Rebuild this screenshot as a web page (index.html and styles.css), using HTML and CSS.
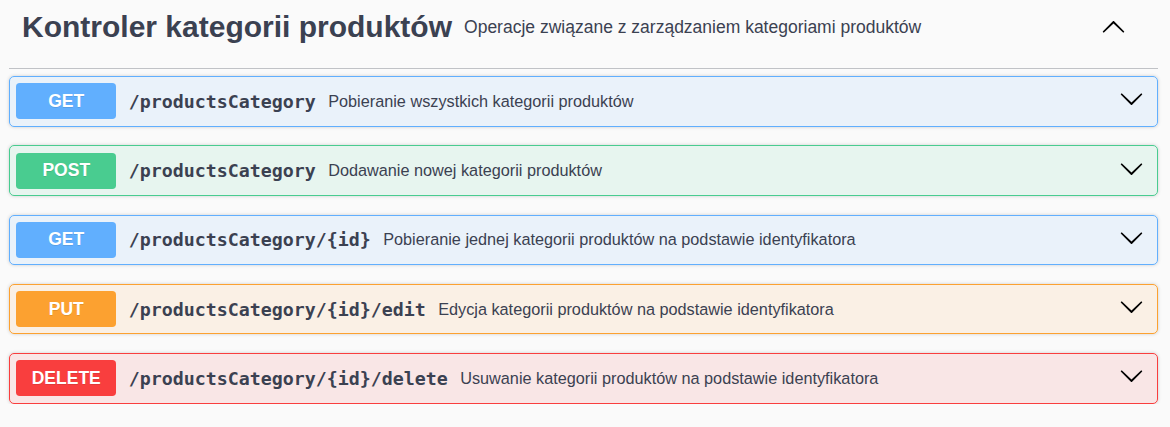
FILE: index.html
```html
<!DOCTYPE html>
<html lang="pl">
<head>
<meta charset="utf-8">
<title>Kontroler kategorii produktów</title>
<link rel="stylesheet" href="styles.css">
</head>
<body>
<div class="wrapper">
  <section class="tag-section">
    <h3 class="tag">
      <span class="tag-title">Kontroler kategorii produktów</span>
      <small class="tag-desc">Operacje związane z zarządzaniem kategoriami produktów</small>
      <button class="expand" aria-label="Zwiń">
        <svg class="chev chev-up" viewBox="0 0 20 20" width="25" height="25"><path d="M17.418 6.109c.272-.268.709-.268.979 0s.271.701 0 .969l-7.908 7.83c-.27.268-.707.268-.979 0l-7.908-7.83c-.27-.268-.27-.701 0-.969.271-.268.709-.268.979 0L10 13.25l7.418-7.141z"/></svg>
      </button>
    </h3>
    <div class="ops">
      <div class="opblock op-get">
        <div class="summary">
          <span class="method">GET</span>
          <span class="path">/productsCategory</span>
          <span class="desc">Pobieranie wszystkich kategorii produktów</span>
          <button class="arrow" aria-label="Rozwiń"><svg class="chev" viewBox="0 0 20 20" width="25" height="25"><path d="M17.418 6.109c.272-.268.709-.268.979 0s.271.701 0 .969l-7.908 7.83c-.27.268-.707.268-.979 0l-7.908-7.83c-.27-.268-.27-.701 0-.969.271-.268.709-.268.979 0L10 13.25l7.418-7.141z"/></svg></button>
        </div>
      </div>
      <div class="opblock op-post">
        <div class="summary">
          <span class="method">POST</span>
          <span class="path">/productsCategory</span>
          <span class="desc">Dodawanie nowej kategorii produktów</span>
          <button class="arrow" aria-label="Rozwiń"><svg class="chev" viewBox="0 0 20 20" width="25" height="25"><path d="M17.418 6.109c.272-.268.709-.268.979 0s.271.701 0 .969l-7.908 7.83c-.27.268-.707.268-.979 0l-7.908-7.83c-.27-.268-.27-.701 0-.969.271-.268.709-.268.979 0L10 13.25l7.418-7.141z"/></svg></button>
        </div>
      </div>
      <div class="opblock op-get">
        <div class="summary">
          <span class="method">GET</span>
          <span class="path">/productsCategory/{id}</span>
          <span class="desc">Pobieranie jednej kategorii produktów na podstawie identyfikatora</span>
          <button class="arrow" aria-label="Rozwiń"><svg class="chev" viewBox="0 0 20 20" width="25" height="25"><path d="M17.418 6.109c.272-.268.709-.268.979 0s.271.701 0 .969l-7.908 7.83c-.27.268-.707.268-.979 0l-7.908-7.83c-.27-.268-.27-.701 0-.969.271-.268.709-.268.979 0L10 13.25l7.418-7.141z"/></svg></button>
        </div>
      </div>
      <div class="opblock op-put">
        <div class="summary">
          <span class="method">PUT</span>
          <span class="path">/productsCategory/{id}/edit</span>
          <span class="desc">Edycja kategorii produktów na podstawie identyfikatora</span>
          <button class="arrow" aria-label="Rozwiń"><svg class="chev" viewBox="0 0 20 20" width="25" height="25"><path d="M17.418 6.109c.272-.268.709-.268.979 0s.271.701 0 .969l-7.908 7.83c-.27.268-.707.268-.979 0l-7.908-7.83c-.27-.268-.27-.701 0-.969.271-.268.709-.268.979 0L10 13.25l7.418-7.141z"/></svg></button>
        </div>
      </div>
      <div class="opblock op-delete">
        <div class="summary">
          <span class="method">DELETE</span>
          <span class="path">/productsCategory/{id}/delete</span>
          <span class="desc">Usuwanie kategorii produktów na podstawie identyfikatora</span>
          <button class="arrow" aria-label="Rozwiń"><svg class="chev" viewBox="0 0 20 20" width="25" height="25"><path d="M17.418 6.109c.272-.268.709-.268.979 0s.271.701 0 .969l-7.908 7.83c-.27.268-.707.268-.979 0l-7.908-7.83c-.27-.268-.27-.701 0-.969.271-.268.709-.268.979 0L10 13.25l7.418-7.141z"/></svg></button>
        </div>
      </div>
    </div>
  </section>
</div>
</body>
</html>
```

FILE: styles.css
```css
html, body {
  margin: 0;
  padding: 0;
  background: #fafafa;
}

body {
  font-family: "Liberation Sans", Arial, sans-serif;
  color: #3b4151;
}

.wrapper {
  padding: 0 12px 0 9px;
}

.tag {
  display: flex;
  align-items: center;
  box-sizing: border-box;
  height: 69px;
  margin: 0 0 7px;
  padding: 0 32px 14px 13px;
  border-bottom: 1px solid rgba(59, 65, 81, 0.3);
  font-size: 30px;
  font-weight: 700;
}

.tag-title {
  line-height: 34px;
  white-space: nowrap;
}

.tag-desc {
  flex: 1;
  padding-left: 12px;
  font-size: 17.5px;
  font-weight: 400;
  line-height: 20px;
}

.expand,
.arrow {
  display: flex;
  align-items: center;
  padding: 0;
  margin: 0;
  border: none;
  background: none;
}

.chev {
  display: block;
  fill: #000;
}

.chev-up {
  transform: rotate(180deg);
}

.ops {
  display: flex;
  flex-direction: column;
  gap: 18.75px;
}

.opblock {
  border: 1px solid #000;
  border-radius: 5px;
  box-shadow: 0 0 3.75px rgba(0, 0, 0, 0.19);
}

.summary {
  display: flex;
  align-items: center;
  padding: 6.25px;
}

.method {
  box-sizing: border-box;
  min-width: 100px;
  padding: 7.5px 0;
  border-radius: 3.75px;
  color: #fff;
  font-size: 17.5px;
  font-weight: 700;
  line-height: 21px;
  text-align: center;
  text-shadow: 0 1px 0 rgba(0, 0, 0, 0.1);
}

.path {
  padding: 0 12.5px;
  font-family: "DejaVu Sans Mono", "Liberation Mono", monospace;
  font-size: 18.27px;
  font-weight: 700;
  color: #3b4151;
  white-space: nowrap;
}

.desc {
  font-size: 16.25px;
  color: #3b4151;
}

.arrow {
  margin-left: auto;
  margin-right: 7.25px;
  margin-bottom: 5px;
}

.op-get { background: rgba(97, 175, 254, 0.1); border-color: #61affe; }
.op-get .method { background: #61affe; }

.op-post { background: rgba(73, 204, 144, 0.1); border-color: #49cc90; }
.op-post .method { background: #49cc90; }

.op-put { background: rgba(252, 161, 48, 0.1); border-color: #fca130; }
.op-put .method { background: #fca130; }

.op-delete { background: rgba(249, 62, 62, 0.1); border-color: #f93e3e; }
.op-delete .method { background: #f93e3e; }
```
